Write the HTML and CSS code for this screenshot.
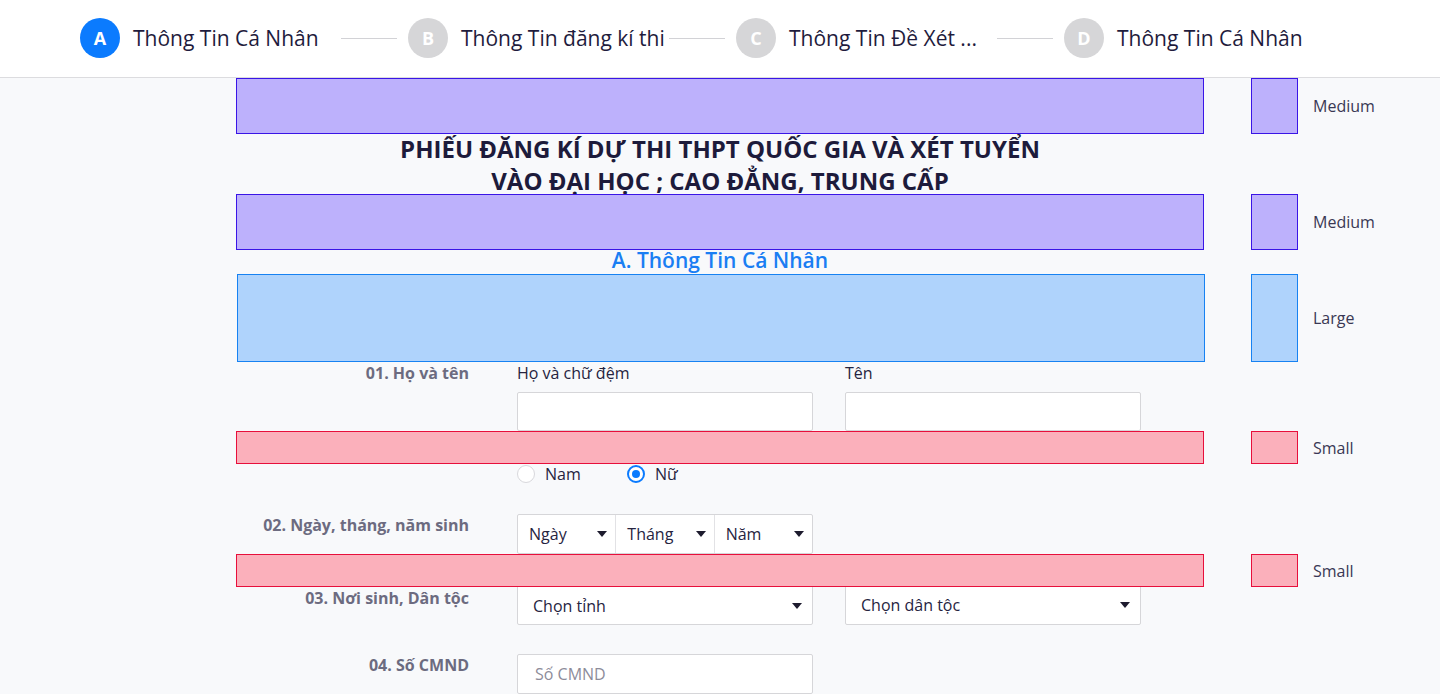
FILE: index.html
```html
<!DOCTYPE html>
<html lang="vi">
<head>
<meta charset="utf-8">
<title>Phiếu đăng kí dự thi</title>
<link rel="stylesheet" href="styles.css">
</head>
<body>
<header class="stepper">
  <div class="step step-active">
    <span class="step-dot">A</span>
    <span class="step-label">Thông Tin Cá Nhân</span>
    <span class="step-line"></span>
  </div>
  <div class="step">
    <span class="step-dot">B</span>
    <span class="step-label">Thông Tin đăng kí thi</span>
    <span class="step-line"></span>
  </div>
  <div class="step">
    <span class="step-dot">C</span>
    <span class="step-label">Thông Tin Đề Xét ...</span>
    <span class="step-line"></span>
  </div>
  <div class="step step-last">
    <span class="step-dot">D</span>
    <span class="step-label">Thông Tin Cá Nhân</span>
  </div>
</header>

<main class="page">
  <div class="spacer-row">
    <div class="spacer spacer-md"></div>
    <div class="swatch spacer-md"></div>
    <span class="swatch-label">Medium</span>
  </div>

  <h1 class="form-title">PHIẾU ĐĂNG KÍ DỰ THI THPT QUỐC GIA VÀ XÉT TUYỂN<br>VÀO ĐẠI HỌC ; CAO ĐẲNG, TRUNG CẤP</h1>

  <div class="spacer-row">
    <div class="spacer spacer-md"></div>
    <div class="swatch spacer-md"></div>
    <span class="swatch-label">Medium</span>
  </div>

  <h2 class="section-title">A. Thông Tin Cá Nhân</h2>

  <div class="spacer-row">
    <div class="spacer spacer-lg"></div>
    <div class="swatch spacer-lg"></div>
    <span class="swatch-label">Large</span>
  </div>

  <div class="form-row row-name">
    <div class="row-label">01. Họ và tên</div>
    <div class="row-fields">
      <div class="field">
        <div class="field-caption">Họ và chữ đệm</div>
        <input class="text-input" type="text">
      </div>
      <div class="field">
        <div class="field-caption">Tên</div>
        <input class="text-input" type="text">
      </div>
    </div>
  </div>

  <div class="spacer-row">
    <div class="spacer spacer-sm"></div>
    <div class="swatch spacer-sm"></div>
    <span class="swatch-label">Small</span>
  </div>

  <div class="form-row row-gender">
    <div class="row-label"></div>
    <div class="row-fields radios">
      <label class="radio"><span class="radio-dot"></span>Nam</label>
      <label class="radio radio-checked"><span class="radio-dot"></span>Nữ</label>
    </div>
  </div>

  <div class="form-row row-dob">
    <div class="row-label">02. Ngày, tháng, năm sinh</div>
    <div class="row-fields">
      <div class="date-group">
        <div class="date-cell"><span>Ngày</span><span class="caret"></span></div>
        <div class="date-cell"><span>Tháng</span><span class="caret"></span></div>
        <div class="date-cell"><span>Năm</span><span class="caret"></span></div>
      </div>
    </div>
  </div>

  <div class="spacer-row">
    <div class="spacer spacer-sm"></div>
    <div class="swatch spacer-sm"></div>
    <span class="swatch-label">Small</span>
  </div>

  <div class="form-row row-place">
    <div class="row-label">03. Nơi sinh, Dân tộc</div>
    <div class="row-fields">
      <div class="select select-province"><span>Chọn tỉnh</span><span class="caret"></span></div>
      <div class="select select-ethnic"><span>Chọn dân tộc</span><span class="caret"></span></div>
    </div>
  </div>

  <div class="form-row row-id">
    <div class="row-label">04. Số CMND</div>
    <div class="row-fields">
      <input class="text-input id-input" type="text" placeholder="Số CMND">
    </div>
  </div>
</main>
</body>
</html>
```

FILE: styles.css
```css
* {
  box-sizing: border-box;
}

html, body {
  margin: 0;
  padding: 0;
}

body {
  background: #f8f9fb;
  font-family: "Open Sans", "Noto Sans", sans-serif;
  color: #1e1c3a;
  height: 694px;
  overflow: hidden;
}

/* ---------- stepper ---------- */
.stepper {
  height: 78px;
  background: #ffffff;
  border-bottom: 1px solid #dcdcdf;
  display: flex;
  align-items: center;
  padding-left: 80px;
  padding-bottom: 1px;
}

.step {
  width: 328px;
  display: flex;
  align-items: center;
}

.step-last {
  width: auto;
}

.step-dot {
  width: 40px;
  height: 40px;
  border-radius: 50%;
  background: #d6d6d8;
  color: #ffffff;
  font-weight: 700;
  font-size: 18px;
  display: flex;
  align-items: center;
  justify-content: center;
  flex-shrink: 0;
}

.step-active .step-dot {
  background: #0b7bfe;
}

.step-label {
  margin-left: 13px;
  font-size: 21px;
  color: #1f1c3d;
  white-space: nowrap;
}

.step-line {
  width: 56px;
  height: 1px;
  background: #d2d2d6;
  margin-left: auto;
  margin-right: 11px;
}

/* ---------- page ---------- */
.page {
  padding-left: 236px;
  display: flex;
  flex-direction: column;
}

.spacer-row {
  display: flex;
  align-items: center;
  position: relative;
  z-index: 1;
}

.spacer {
  width: 968px;
  border: 1px solid;
}

.swatch {
  width: 47px;
  margin-left: 47px;
  border: 1px solid;
}

.swatch-label {
  margin-left: 15px;
  font-size: 16px;
  color: #3a3854;
}

.spacer-md {
  height: 56px;
  background: #bdb1fc;
  border-color: #3a15e6;
}

.spacer-lg {
  height: 88px;
  background: #afd3fc;
  border-color: #1782f2;
}

.spacer-lg.spacer {
  margin-left: 1px;
}

.spacer-lg.swatch {
  margin-left: 46px;
}

.spacer-sm {
  height: 33px;
  background: #fbb0bb;
  border-color: #e70f3b;
}

.form-title {
  width: 968px;
  margin: -1px 0 -3px;
  text-align: center;
  font-size: 24px;
  line-height: 32px;
  font-weight: 700;
  color: #1d1b3b;
}

.section-title {
  width: 968px;
  margin: 0;
  height: 24px;
  text-align: center;
  font-size: 21px;
  line-height: 21px;
  font-weight: 600;
  color: #1a7ef3;
}

/* ---------- form rows ---------- */
.form-row {
  width: 968px;
  display: flex;
  align-items: flex-start;
}

.row-label {
  width: 233px;
  margin-right: 48px;
  text-align: right;
  font-size: 16px;
  line-height: 20px;
  font-weight: 700;
  color: #6c6b80;
  padding-top: 1px;
  flex-shrink: 0;
}

.row-fields {
  display: flex;
  gap: 32px;
}

.field {
  width: 296px;
}

.field-caption {
  font-size: 16px;
  line-height: 20px;
  padding-top: 1px;
  color: #26243f;
  margin-bottom: 9px;
}

.text-input {
  display: block;
  width: 296px;
  height: 40px;
  border: 1px solid #d6d6d9;
  border-radius: 2px;
  background: #ffffff;
  font-family: inherit;
  font-size: 16px;
  padding: 0 17px;
  color: #26243f;
  outline: none;
}

.text-input::placeholder {
  color: #8d8c9a;
}

.row-name .text-input {
  height: 39px;
}

/* radios */
.row-gender {
  height: 20px;
  margin-bottom: 30px;
}

.radios {
  gap: 0;
}

.radio {
  display: flex;
  align-items: center;
  font-size: 16px;
  line-height: 20px;
  color: #26243f;
  width: 110px;
}

.radio-dot {
  width: 18px;
  height: 18px;
  border-radius: 50%;
  border: 1px solid #d8d8dc;
  background: #ffffff;
  margin-right: 10px;
  display: flex;
  align-items: center;
  justify-content: center;
}

.radio-checked .radio-dot {
  border: 2px solid #0b7bfe;
}

.radio-checked .radio-dot::after {
  content: "";
  width: 8px;
  height: 8px;
  border-radius: 50%;
  background: #0b7bfe;
}

/* date */
.date-group {
  display: flex;
  width: 296px;
  height: 40px;
  border: 1px solid #d6d6d9;
  border-radius: 2px;
  background: #ffffff;
}

.date-cell {
  flex: 1;
  display: flex;
  align-items: center;
  justify-content: space-between;
  padding: 0 8px 0 11px;
  font-size: 16px;
  color: #26243f;
}

.date-cell + .date-cell {
  border-left: 1px solid #e2e2e5;
}

.caret {
  width: 0;
  height: 0;
  border-left: 5px solid transparent;
  border-right: 5px solid transparent;
  border-top: 6px solid #1d1b2e;
}

/* selects */
.row-place {
  margin-bottom: 29px;
}

.select {
  width: 296px;
  height: 40px;
  margin-top: -2px;
  display: flex;
  align-items: center;
  justify-content: space-between;
  padding: 0 10px 0 15px;
  border: 1px solid #d6d6d9;
  border-radius: 2px;
  background: #ffffff;
  font-size: 16px;
  color: #26243f;
}

.select-province {
  padding-top: 2px;
}

.id-input {
  padding-left: 17px;
}
```
